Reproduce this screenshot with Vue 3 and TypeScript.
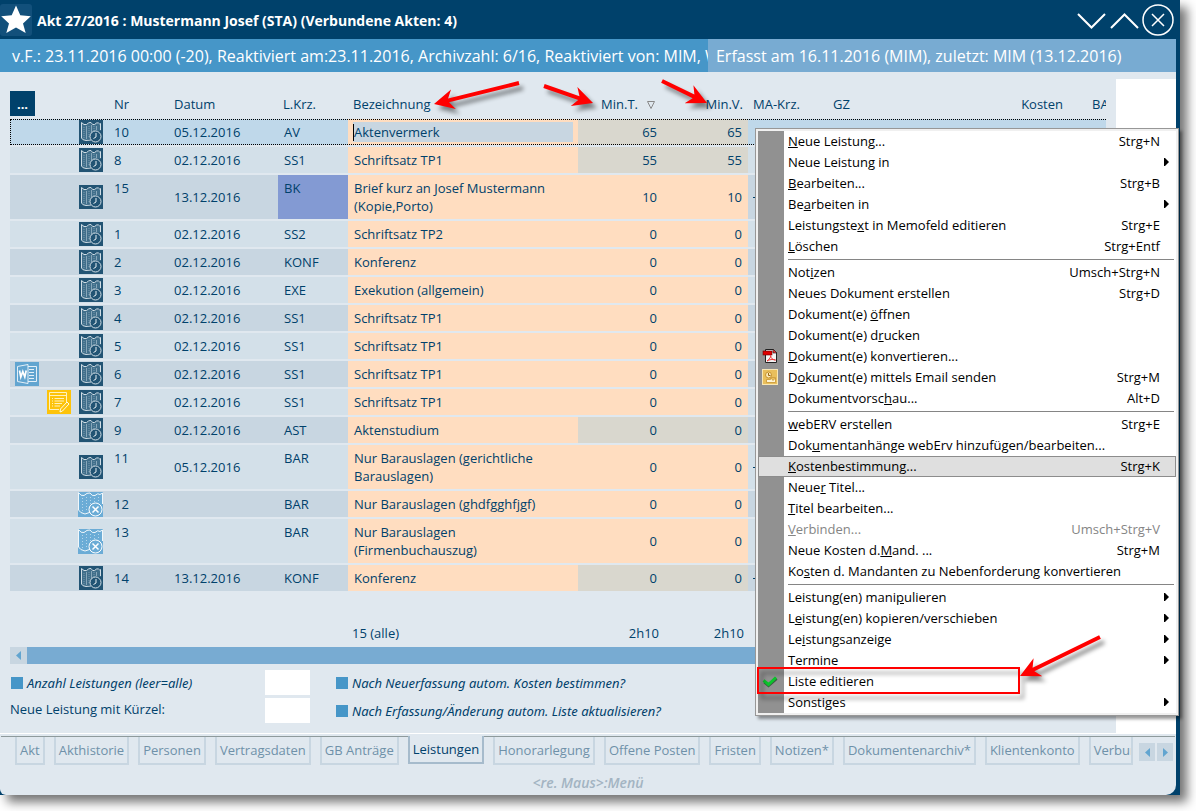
<script setup lang="ts">
import { ref } from 'vue'

type IconKind = 'clock' | 'cancel'

interface Entry {
  nr: number
  date: string
  code: string
  text: string
  minT: number
  minV: number
  icon: IconKind
  muted?: boolean
  marked?: boolean
  word?: boolean
  note?: boolean
  staff?: boolean
}

interface MenuItem {
  label: string
  keys?: string
  sub?: boolean
  icon?: 'pdf' | 'mail' | 'check'
  state?: 'hover' | 'disabled'
}

interface Arrow {
  tail: [number, number]
  tip: [number, number]
}

const entries: Entry[] = [
  { nr: 10, date: '05.12.2016', code: 'AV', text: 'Aktenvermerk', minT: 65, minV: 65, icon: 'clock', muted: true },
  { nr: 8, date: '02.12.2016', code: 'SS1', text: 'Schriftsatz TP1', minT: 55, minV: 55, icon: 'clock', muted: true },
  { nr: 15, date: '13.12.2016', code: 'BK', text: 'Brief kurz an Josef Mustermann\n(Kopie,Porto)', minT: 10, minV: 10, icon: 'clock', marked: true, staff: true },
  { nr: 1, date: '02.12.2016', code: 'SS2', text: 'Schriftsatz TP2', minT: 0, minV: 0, icon: 'clock' },
  { nr: 2, date: '02.12.2016', code: 'KONF', text: 'Konferenz', minT: 0, minV: 0, icon: 'clock' },
  { nr: 3, date: '02.12.2016', code: 'EXE', text: 'Exekution (allgemein)', minT: 0, minV: 0, icon: 'clock' },
  { nr: 4, date: '02.12.2016', code: 'SS1', text: 'Schriftsatz TP1', minT: 0, minV: 0, icon: 'clock' },
  { nr: 5, date: '02.12.2016', code: 'SS1', text: 'Schriftsatz TP1', minT: 0, minV: 0, icon: 'clock' },
  { nr: 6, date: '02.12.2016', code: 'SS1', text: 'Schriftsatz TP1', minT: 0, minV: 0, icon: 'clock', word: true },
  { nr: 7, date: '02.12.2016', code: 'SS1', text: 'Schriftsatz TP1', minT: 0, minV: 0, icon: 'clock', note: true },
  { nr: 9, date: '02.12.2016', code: 'AST', text: 'Aktenstudium', minT: 0, minV: 0, icon: 'clock', muted: true },
  { nr: 11, date: '05.12.2016', code: 'BAR', text: 'Nur Barauslagen (gerichtliche\nBarauslagen)', minT: 0, minV: 0, icon: 'clock', staff: true },
  { nr: 12, date: '', code: 'BAR', text: 'Nur Barauslagen (ghdfgghfjgf)', minT: 0, minV: 0, icon: 'cancel' },
  { nr: 13, date: '', code: 'BAR', text: 'Nur Barauslagen\n(Firmenbuchauszug)', minT: 0, minV: 0, icon: 'cancel' },
  { nr: 14, date: '13.12.2016', code: 'KONF', text: 'Konferenz', minT: 0, minV: 0, icon: 'clock', muted: true, staff: true },
]

// "&" marks the access key of a menu entry
const menuGroups: MenuItem[][] = [
  [
    { label: '&Neue Leistung...', keys: 'Strg+N' },
    { label: 'Neue Leistung in', sub: true },
    { label: '&Bearbeiten...', keys: 'Strg+B' },
    { label: 'Be&arbeiten in', sub: true },
    { label: 'Leistungste&xt in Memofeld editieren', keys: 'Strg+E' },
    { label: '&Löschen', keys: 'Strg+Entf' },
  ],
  [
    { label: 'Not&izen', keys: 'Umsch+Strg+N' },
    { label: 'Neues Dokument erstellen', keys: 'Strg+D' },
    { label: 'Dokument(e) &öffnen' },
    { label: 'Dokument(e) d&rucken' },
    { label: '&Dokument(e) konvertieren...', icon: 'pdf' },
    { label: 'D&okument(e) mittels Email senden', keys: 'Strg+M', icon: 'mail' },
    { label: 'Dokumentvorsc&hau...', keys: 'Alt+D' },
  ],
  [
    { label: '&webERV erstellen', keys: 'Strg+E' },
    { label: 'Dok&umentanhänge webErv hinzufügen/bearbeiten...' },
    { label: '&Kostenbestimmung...', keys: 'Strg+K', state: 'hover' },
    { label: 'Neue&r Titel...' },
    { label: '&Titel bearbeiten...' },
    { label: '&Verbinden...', keys: 'Umsch+Strg+V', state: 'disabled' },
    { label: 'Neue Kosten d.&Mand. ...', keys: 'Strg+M' },
    { label: 'Ko&sten d. Mandanten zu Nebenforderung konvertieren' },
  ],
  [
    { label: 'Leistung(en) mani&pulieren', sub: true },
    { label: 'L&eistung(en) kopieren/verschieben', sub: true },
    { label: 'Le&istungsanzeige', sub: true },
    { label: 'Termine', sub: true },
    { label: 'Liste editieren', icon: 'check' },
    { label: 'Sonsti&ges', sub: true },
  ],
]

function split(label: string): [string, string, string] {
  const i = label.indexOf('&')
  return i < 0 ? [label, '', ''] : [label.slice(0, i), label[i + 1], label.slice(i + 2)]
}

const tabs = [
  'Akt', 'Akthistorie', 'Personen', 'Vertragsdaten', 'GB Anträge', 'Leistungen', 'Honorarlegung',
  'Offene Posten', 'Fristen', 'Notizen*', 'Dokumentenarchiv*', 'Klientenkonto', 'Verbundene Akten',
]
const activeTab = ref('Leistungen')
const editText = ref('Aktenvermerk')

const arrows: Arrow[] = [
  { tail: [519, 83], tip: [434, 104] },
  { tail: [544, 86], tip: [593, 103] },
  { tail: [662, 81], tip: [707, 103] },
  { tail: [1100, 637], tip: [1020, 676] },
]

function arrowPoints(a: Arrow): string {
  const dx = a.tail[0] - a.tip[0]
  const dy = a.tail[1] - a.tip[1]
  const len = Math.hypot(dx, dy)
  const at = (along: number, side: number) =>
    `${a.tip[0] + (dx * along - dy * side) / len},${a.tip[1] + (dy * along + dx * side) / len}`
  return [at(0, 0), at(20, 10), at(15, 2), at(len, 2), at(len, -2), at(15, -2), at(20, -10)].join(' ')
}
</script>

<template>
  <div class="window">
    <header class="titlebar">
      <svg class="star" viewBox="0 0 32 32" aria-hidden="true">
        <rect width="32" height="32" rx="3" fill="#12507b" />
        <path d="M16 1.500L20.300 11.300L30.800 12.300L23 19.500L25.700 29L16 23.500L6.300 29L9 19.500L1.200 12.300L11.700 11.300Z" fill="#fff" />
      </svg>
      <h1>Akt 27/2016 : Mustermann Josef (STA) (Verbundene Akten: 4)</h1>
      <button class="winbtn" type="button" aria-label="Nächster">
        <svg viewBox="0 0 30 32"><path d="M1 10L14.500 23.500L28 10" /></svg>
      </button>
      <button class="winbtn" type="button" aria-label="Voriger">
        <svg viewBox="0 0 30 32"><path d="M1 24L14.500 10.500L28 24" /></svg>
      </button>
      <button class="winbtn close" type="button" aria-label="Schließen">
        <svg viewBox="0 0 32 32"><circle cx="16" cy="16" r="15" /><path d="M10 10L22 22M22 10L10 22" /></svg>
      </button>
    </header>

    <div class="infobar">
      <div class="info-left">v.F.: 23.11.2016 00:00 (-20), Reaktiviert am:23.11.2016, Archivzahl: 6/16, Reaktiviert von: MIM, WV</div>
      <div class="info-right">Erfasst am 16.11.2016 (MIM), zuletzt: MIM (13.12.2016)</div>
    </div>

    <div class="body">
      <main>
        <div class="scroller">
          <table>
            <colgroup>
              <col class="w-ico" /><col class="w-ico" /><col class="w-map" /><col class="w-nr" /><col class="w-date" />
              <col class="w-code" /><col class="w-text" /><col class="w-min" /><col class="w-min" />
              <col class="w-ma" /><col class="w-gz" /><col class="w-cost" /><col class="w-ba" />
            </colgroup>
            <thead>
              <tr>
                <th colspan="3" class="opt"><button type="button">...</button></th>
                <th>Nr</th>
                <th>Datum</th>
                <th>L.Krz.</th>
                <th>Bezeichnung</th>
                <th class="sorted">Min.T.<svg viewBox="0 0 8 8"><path d="M.5 .5H7.500L4 7.500Z" /></svg></th>
                <th class="num">Min.V.</th>
                <th>MA-Krz.</th>
                <th>GZ</th>
                <th class="num">Kosten</th>
                <th class="ba">BA</th>
              </tr>
            </thead>
            <tbody>
              <tr v-for="(e, i) in entries" :key="e.nr" :class="{ current: i === 0 }">
                <td class="ico">
                  <svg v-if="e.word" viewBox="0 0 24 24">
                    <rect width="24" height="24" fill="#62a5d0" />
                    <path d="M2.500 4.500L13 2.500V21.500L2.500 19.500Z" fill="#62a5d0" stroke="#e4f0f8" />
                    <path d="M13 4.500H21.500V19.500H13M14 7.500H19M14 10.500H19M14 13.500H19M14 16.500H19" fill="none" stroke="#e4f0f8" />
                    <path d="M4.500 8.500L5.800 15L7.800 9.500L9.800 15L11.200 8.500" fill="none" stroke="#fff" stroke-width="1.700" />
                  </svg>
                </td>
                <td class="ico">
                  <svg v-if="e.note" viewBox="0 0 24 24">
                    <rect width="24" height="24" fill="#fdc30a" />
                    <path d="M12 19.500H2.500V2.500H19.500V12M2.500 5.500H19.500M5 8.500H6M7.500 8.500H17M5 11H6M7.500 11H17M5 13.500H6M7.500 13.500H15M5 16H6M7.500 16H13" fill="none" stroke="#fff2bd" />
                    <path d="M13 22L13.500 19L20 12L22 14L15.500 21Z" fill="#fdc30a" stroke="#fffbe8" />
                  </svg>
                </td>
                <td class="ico">
                  <svg v-if="e.icon === 'clock'" viewBox="0 0 24 24">
                    <rect width="24" height="24" fill="#225474" />
                    <path d="M3 3L7 5L11 3L14 5L18 3L22 5V11C16 9 11 13 11.500 18L7 20.500L3 19Z" fill="#416f8b" />
                    <path d="M12 20L7 20.500Q3 20 2.500 18V2.500Q5 5.500 7.500 4.500Q10 2 12 2.500Q13.500 5.500 15.500 4.500Q18 2 19.500 3Q20.500 4.500 21.500 3.500V10" fill="none" stroke="#d0dde5" />
                    <path d="M7.500 6V19M12.500 5V13M17.500 6V10" fill="none" stroke="#88a7ba" />
                    <path d="M5 7V18M10 6V18M15 6V11" fill="none" stroke="#7a9cb0" stroke-dasharray="1 1" />
                    <circle cx="16.500" cy="16.500" r="5.500" fill="#225474" stroke="#d0dde5" />
                    <path d="M17 13V17L14.500 18.500" fill="none" stroke="#e6eef2" />
                  </svg>
                  <svg v-else class="wide" viewBox="0 0 25 25">
                    <rect width="25" height="25" fill="#6bacd6" />
                    <path d="M13 20L7 22Q2 21 .5 18V.5Q3 4.500 6 3.500Q9 .5 12 1Q14 4.500 17 3.500Q20 .5 22 2.500L24.500 1V12" fill="none" stroke="#f0f7fb" />
                    <path d="M4.500 6V20M8.500 5V20M12.500 5V15M16.500 6V11M20.500 5V11" fill="none" stroke="#b5d6eb" stroke-dasharray="1 2" />
                    <circle cx="17.500" cy="17.500" r="6.500" fill="#6bacd6" stroke="#fff" />
                    <path d="M14.500 14.500L20.500 20.500M20.500 14.500L14.500 20.500" fill="none" stroke="#fff" stroke-width="1.500" />
                  </svg>
                </td>
                <td class="top">{{ e.nr }}</td>
                <td>{{ e.date }}</td>
                <td class="top" :class="{ marked: e.marked }">{{ e.code }}</td>
                <td class="text">
                  <div v-if="i === 0" class="editor"><input v-model="editText" type="text" aria-label="Bezeichnung" /></div>
                  <template v-else>{{ e.text }}</template>
                </td>
                <td class="num min" :class="{ muted: e.muted }">{{ e.minT }}</td>
                <td class="num min" :class="{ muted: e.muted }">{{ e.minV }}</td>
                <td><i v-if="e.staff" class="staff"></i></td>
                <td></td>
                <td></td>
                <td></td>
              </tr>
            </tbody>
            <tfoot>
              <tr>
                <td colspan="6"></td>
                <td class="count">15 (alle)</td>
                <td class="num">2h10</td>
                <td class="num">2h10</td>
                <td colspan="4"></td>
              </tr>
            </tfoot>
          </table>
        </div>

        <div class="hscroll">
          <button type="button" aria-label="Nach links"><svg viewBox="0 0 5 9"><path d="M5 0V9L0 4.500Z" /></svg></button>
          <div class="thumb"></div>
        </div>

        <form class="options" @submit.prevent>
          <div class="field">
            <input id="limit" type="checkbox" /><label class="it" for="limit">Anzahl Leistungen (leer=alle)</label>
          </div>
          <input class="box" type="text" aria-label="Anzahl Leistungen" />
          <div class="field">
            <input id="autocost" type="checkbox" /><label class="it" for="autocost">Nach Neuerfassung autom. Kosten bestimmen?</label>
          </div>
          <div class="field short"><label for="code">Neue Leistung mit Kürzel:</label></div>
          <input id="code" class="box" type="text" />
          <div class="field">
            <input id="autolist" type="checkbox" /><label class="it" for="autolist">Nach Erfassung/Änderung autom. Liste aktualisieren?</label>
          </div>
        </form>
      </main>
      <aside></aside>
    </div>

    <footer>
      <div class="tabline">
        <nav>
          <button v-for="t in tabs" :key="t" type="button" :class="{ active: t === activeTab }" @click="activeTab = t">{{ t }}</button>
        </nav>
        <div class="pager">
          <button type="button" aria-label="Tabs zurück"><svg viewBox="0 0 5 9"><path d="M5 0V9L0 4.500Z" /></svg></button>
          <button type="button" aria-label="Tabs weiter"><svg viewBox="0 0 5 9"><path d="M0 0V9L5 4.500Z" /></svg></button>
        </div>
      </div>
      <p class="hint">&lt;re. Maus&gt;:Menü</p>
    </footer>

    <div class="menu" role="menu">
      <div v-for="(group, g) in menuGroups" :key="g" class="group">
        <button
          v-for="item in group" :key="item.label" type="button" role="menuitem"
          :class="item.state" :disabled="item.state === 'disabled'"
        >
          <span class="gutter">
            <svg v-if="item.icon === 'pdf'" viewBox="0 0 16 16">
              <path d="M3.500 1.500H11L14.500 5V14.500H3.500Z" fill="#f4f4f4" stroke="#222" />
              <path d="M11 1V5H15Z" fill="#e33" stroke="#222" stroke-width=".7" />
              <rect x="1" y="3" width="9" height="4" fill="#e00000" stroke="#600" stroke-width=".6" />
              <path d="M5 13C8 11 9 8.500 8.500 7.500C9 10.500 11 12 13.500 12C11 11 7 11.500 5 13" fill="none" stroke="#e33" />
            </svg>
            <svg v-else-if="item.icon === 'mail'" viewBox="0 0 16 16">
              <rect x=".5" y=".5" width="15" height="15" fill="#e9bf5c" stroke="#f8e6b4" />
              <circle cx="6.500" cy="6" r="3" fill="#fbe9b8" stroke="#c8942e" />
              <path d="M6.500 4V6.500H8.500" fill="none" stroke="#9b6a14" />
              <path d="M8.500 8.500H13.500V13.500H4.500V10.500H8.500ZM9 9L11 11.500L13.500 9" fill="#fdf3d4" stroke="#c8942e" stroke-width=".8" />
            </svg>
            <svg v-else-if="item.icon === 'check'" viewBox="0 0 16 16">
              <path d="M2.500 9L6.500 12.500L14.500 5.500" fill="none" stroke="#3c5a40" stroke-width="3" />
              <path d="M1.500 7.500L6.500 11.500L14 4.500" fill="none" stroke="#0cc42c" stroke-width="3" />
            </svg>
          </span>
          <span class="label">{{ split(item.label)[0] }}<u>{{ split(item.label)[1] }}</u>{{ split(item.label)[2] }}</span>
          <span class="keys">{{ item.keys }}</span>
          <svg class="more" viewBox="0 0 5 8"><path v-if="item.sub" d="M0 0H1L5 4L1 8H0Z" /></svg>
        </button>
      </div>
    </div>

    <div class="highlight"></div>
    <svg class="arrows" width="1180" height="795" aria-hidden="true">
      <polygon v-for="(a, i) in arrows" :key="i" :points="arrowPoints(a)" />
    </svg>
  </div>
</template>

<style>
body {
  padding-bottom: 16px;
  background: #fff;
}
</style>

<style scoped>
.window {
  position: relative;
  box-sizing: border-box;
  margin-right: 16px;
  padding-right: 4px;
  background: #00416b;
  box-shadow: 7px 7px 10px rgba(0, 0, 0, 0.55);
  font: 13px/18px "Open Sans", "Noto Sans", sans-serif;
  color: #00416b;
}
button, input {
  font: inherit;
  color: inherit;
  border: 0;
  border-radius: 0;
  margin: 0;
  padding: 0;
  background: none;
  box-sizing: border-box;
}
input:focus { outline: none; }
svg { display: block; }

.titlebar {
  display: flex;
  align-items: center;
  height: 39px;
  color: #fff;
}
.star { width: 32px; height: 32px; }
h1 {
  flex: 1;
  margin: 2px 0 0 5px;
  font-size: 14px;
  line-height: 18px;
  font-weight: 700;
}
.winbtn { width: 30px; height: 32px; margin-right: 3px; }
.winbtn.close { width: 32px; margin: 0 2px 0 -1px; }
.winbtn svg { fill: none; stroke: #fff; stroke-width: 2; }
.winbtn.close svg { stroke-width: 1.5; }

.infobar {
  display: flex;
  height: 33px;
  font-size: 16px;
  line-height: 34px;
  color: #fff;
  white-space: nowrap;
}
.info-left { flex: 708; min-width: 0; box-sizing: border-box; padding-left: 12px; background: #4696c8; overflow: hidden; }
.info-right { flex: 468; min-width: 0; box-sizing: border-box; padding-left: 8px; background: #78abd2; overflow: hidden; }

.body { display: flex; background: #e0e8ef; }
main { flex: 1; min-width: 0; padding: 17px 10px 10px; }
aside { width: 60px; margin-top: 7px; background: #fff; }

.scroller { overflow: hidden; }
table {
  table-layout: fixed;
  width: 1178px;
  border-collapse: separate;
  border-spacing: 0 2px;
}
.w-ico { width: 32px; }
.w-map { width: 35px; }
.w-nr { width: 60px; }
.w-date { width: 109px; }
.w-code { width: 70px; }
.w-text { width: 230px; }
.w-min { width: 85px; }
.w-ma { width: 80px; }
.w-gz { width: 140px; }
.w-cost { width: 100px; }
.w-ba { width: 120px; }
th {
  height: 26px;
  padding: 0 5px;
  font-weight: 400;
  text-align: left;
}
th.opt { padding: 0; vertical-align: top; }
.opt button {
  display: block;
  width: 25px;
  height: 25px;
  background: #00416b;
  color: #fff;
  font-weight: 700;
}
th.num, td.num { text-align: right; }
th.sorted { padding-left: 23px; }
.sorted svg {
  display: inline-block;
  width: 8px;
  height: 8px;
  margin-left: 9px;
  fill: none;
  stroke: #888;
}
th.ba { padding-left: 24px; }

td { height: 26px; padding: 0 5px; box-sizing: border-box; }
tbody td { background: #d3e0e9; }
tbody tr:nth-child(odd) td { background: #c8d6e1; }
tbody tr.current td { background: #bfd8ea; }
tr.current { outline: 1px dotted #000; outline-offset: -1px; }
tbody td.top, tbody td.text { vertical-align: top; padding: 4px 6px; }
tbody td.top:nth-child(4) { padding-left: 5px; }
tbody tr:nth-child(n) td.marked { background: #839ad3; }
tbody tr:nth-child(n) td.text { background: #ffddc0; white-space: pre-line; }
tbody tr:nth-child(n) td.min { background: #ffddc0; padding-right: 6px; }
tbody tr:nth-child(n) td.min.muted { background: #d9d7ce; }
tbody td.ico { padding: 0 0 0 5px; }
.ico svg { width: 24px; height: 24px; }
.ico svg.wide { width: 25px; height: 25px; margin-left: -1px; }
tbody tr.current td.text { padding: 3px 5px; }
.editor { height: 20px; padding: 2px 0; box-sizing: border-box; background: #c8d6e1; }
.editor input { display: block; width: 100%; height: 17px; border-left: 1px solid #000; line-height: 17px; }
.staff { display: block; width: 20px; height: 1px; background: #00416b; }
tfoot td { height: 52px; padding: 31px 4px 3px; }

.hscroll { display: flex; height: 17px; }
.hscroll button, .pager button {
  display: flex;
  align-items: center;
  justify-content: center;
  width: 17px;
  height: 17px;
  background: #c8d6e1;
}
.hscroll svg, .pager svg { width: 5px; height: 9px; fill: #62a5d0; }
.thumb { flex: 1; background: #78abd2; }

.options {
  display: grid;
  grid-template-columns: 255px 45px 1fr;
  gap: 3px 0;
  margin-top: 6px;
}
.field { display: flex; align-items: center; height: 25px; margin-left: 26px; }
.field:first-child { margin-left: 1px; }
.field.short { margin-left: 0; height: 22px; }
.field input {
  appearance: none;
  width: 12px;
  height: 12px;
  margin-right: 4px;
  background: #4696c8;
}
.it { font-family: "Noto Sans", "Open Sans", sans-serif; font-style: italic; }
.box { width: 45px; height: 25px; padding: 0 4px; background: #fff; }

footer { padding-bottom: 2px; background: #e0e8ef; border-top: 1px solid #fff; border-radius: 0 0 10px 6px; }
.tabline {
  display: flex;
  align-items: flex-start;
  margin: 2px 1px 0;
  border-top: 1px solid #8e9a9c;
}
nav {
  display: flex;
  align-items: flex-start;
  gap: 9px;
  flex: 1;
  min-width: 0;
  margin: -1px 0 0 14px;
  padding-top: 1px;
  overflow: hidden;
}
nav button {
  flex: none;
  height: 28px;
  padding: 0 3px;
  border: 2px solid #c8d6e1;
  border-top: 0;
  color: #6f91a9;
  white-space: nowrap;
}
nav button:last-child { flex: 1 1 0; min-width: 0; overflow: hidden; text-align: left; }
nav button.active {
  margin-top: -1px;
  border-color: #a6bbcc;
  background: #e0e8ef;
  color: #00416b;
}
.pager { display: flex; gap: 2px; margin: 6px 2px 0 6px; }
.pager button { width: 16px; height: 18px; }
.hint {
  margin: 8px 0 0;
  font-size: 14px;
  line-height: 20px;
  font-weight: 600;
  font-style: italic;
  text-align: center;
  color: #a3b4c2;
}

.menu {
  position: absolute;
  top: 128px;
  right: 1px;
  width: 424px;
  box-sizing: border-box;
  padding: 2px;
  border: 1px solid #979797;
  background: linear-gradient(90deg, #919191 26px, #fff 26px) content-box, #f0f0f0;
  box-shadow: 3px 3px 3px rgba(0, 0, 0, 0.4);
  color: #000;
}
.group + .group::before {
  content: "";
  display: block;
  height: 1px;
  margin: 2px 2px 2px 30px;
  background: #858585;
}
.menu button {
  display: flex;
  align-items: center;
  width: 100%;
  height: 21px;
  padding-bottom: 2px;
  text-align: left;
  white-space: nowrap;
}
.menu button.hover { background: #dfdfdf; box-shadow: inset 0 0 0 1px #8c8c8c; }
.menu button.disabled { color: #858585; }
.gutter { width: 30px; padding-left: 4px; box-sizing: border-box; }
.gutter svg { width: 16px; height: 16px; }
.label { flex: 1; }
.more { width: 5px; height: 8px; margin: 0 7px 0 4px; }

.highlight {
  position: absolute;
  top: 667px;
  right: 160px;
  width: 263px;
  height: 27px;
  box-sizing: border-box;
  border: 2px solid #f00;
  filter: drop-shadow(4px 5px 2px rgba(0, 0, 0, 0.4));
}
.arrows {
  position: absolute;
  top: 0;
  right: 0;
  pointer-events: none;
  fill: #f00;
  filter: drop-shadow(4px 5px 2px rgba(0, 0, 0, 0.45));
}
</style>
